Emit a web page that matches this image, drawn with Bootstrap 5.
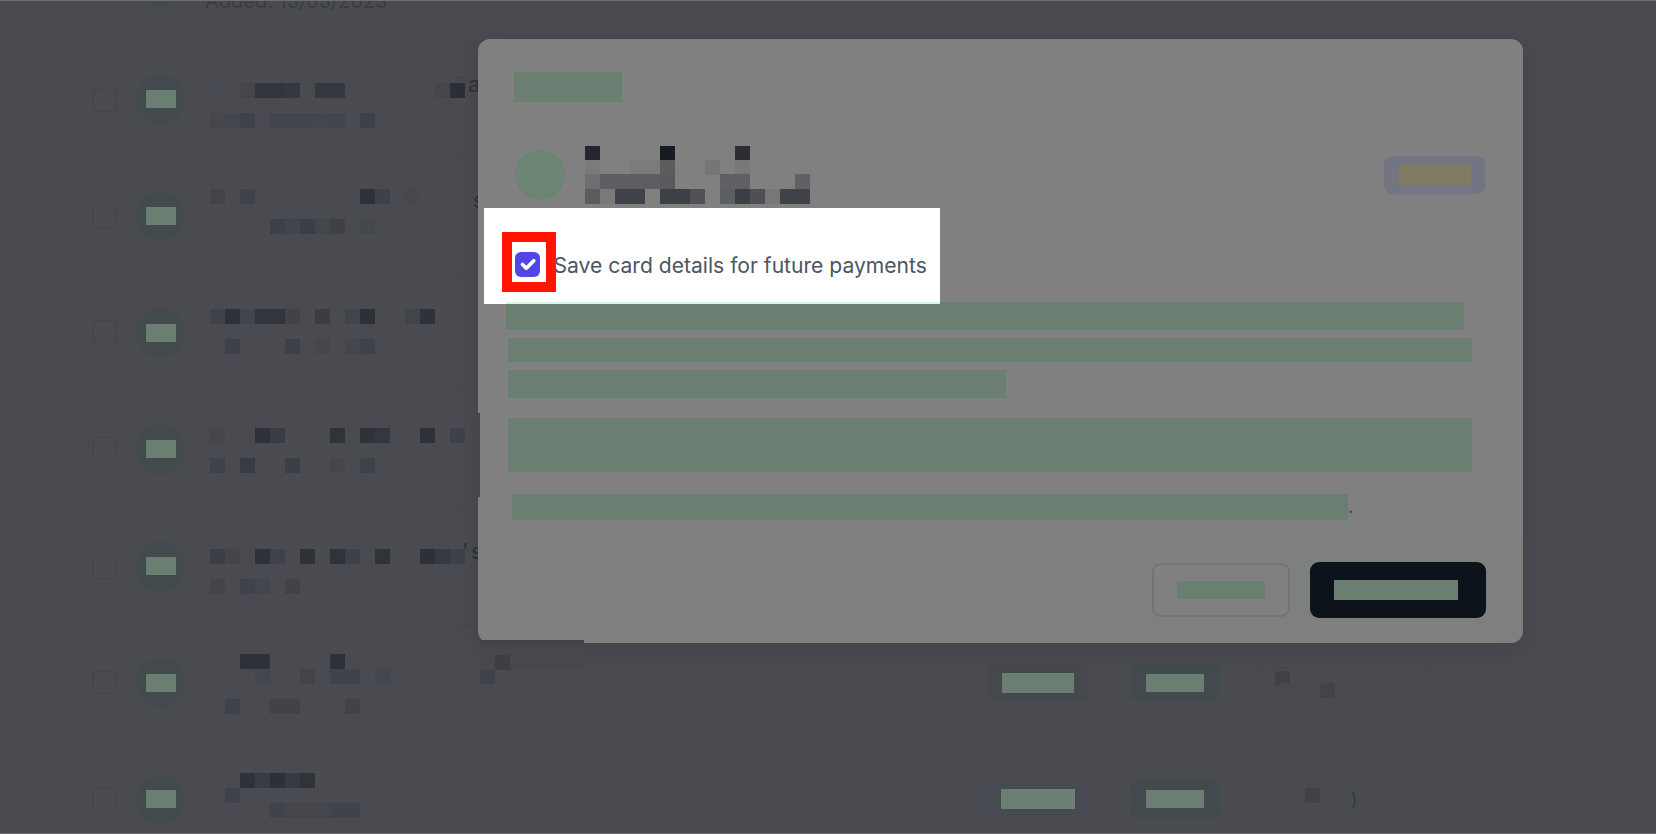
<!doctype html>
<html lang="en">
<head>
<meta charset="utf-8">
<title>Save card details</title>
<link href="https://cdn.jsdelivr.net/npm/bootstrap@5.3.0/dist/css/bootstrap.min.css" rel="stylesheet">
<style>
html,body{height:834px;overflow:hidden;background:#494b51;font-family:Inter,"Liberation Sans",sans-serif}
.stage{position:relative;height:834px;overflow:hidden;border-top:1px solid #6f7073;border-bottom:1px solid #6f7073}
.rows{margin-left:52px;width:1414px;background:#4a4b50;height:832px;margin-top:0}
.rows-inner{margin-top:-76px}
.line-row{height:116.67px;padding-left:40px;padding-right:39px;border-bottom:1px solid #46474c}
.tick{width:25px;height:25px;border:2px solid #46474c;border-radius:6px;flex:none}
.ava{width:49px;height:49px;border-radius:50%;background:#424a4d;flex:none;margin-left:19px}
.mint{background:#6a7f72;display:block}
.ava-in{width:30px;height:18px}
.mos{width:300px;height:116px;margin-left:25px;flex:none;overflow:visible}
.mos rect,.mos-top rect,.mos-card rect{width:15px;height:15px}
.mos text{font:22px Inter,"Liberation Sans",sans-serif;fill:#2f3138}
.mos .dim{fill:#46474c}
.added{font-size:20px !important;fill:#3a3c44 !important}
.pill-a{width:102px;height:37px;background:#47484d;border-radius:8px}
.pill-a.bluish{height:32px;background:#484a53}
.pill-b{width:90px;height:37px;background:#424a4d;border-radius:8px;margin-left:41px}
.pm-a{width:72px;height:20px}.pm-a2{width:74px;height:20px}.pm-b{width:58px;height:18px}
.mini-card{width:167px;height:64px;border:1px solid #47484c;border-radius:8px;margin-left:40px}
.mos-card{width:165px;height:62px;display:block}
.mos-card text{font:18px Inter,"Liberation Sans",sans-serif;fill:#35373e}
.veil{position:absolute;left:478px;top:38px;width:1045px;height:604px;border-radius:12px;background:linear-gradient(#808080 499px,#7e807e 499px);box-shadow:0 6px 24px rgba(0,0,0,.1);border:0;display:block;padding-top:33px}
.v-title{width:108px;height:30px;margin-left:36px}
.v-person{height:58px;margin-top:44px;padding-left:37px;padding-right:38px}
.v-circle{width:50px;height:50px;border-radius:50%;background:#6b8474;flex:none}
.mos-top{width:225px;height:58px;margin-left:20px;flex:none}
.v-badge{width:101px;height:38px;border-radius:8px;background:#737583}
.v-badge i{display:block;width:72px;height:20px;background:#807c64}
.v-white{width:456px;height:96px;background:#fff;margin:4px 0 -2px 6px;padding:24px 0 0 18px}
.v-red{width:54px;height:60px;border:10px solid #ff1400;background:#fff;flex:none;padding:10px 0 0 3px}
.v-red .form-check-input{width:25px;height:25px;margin:0;display:block;border-radius:6px;border:0;background-color:#4f46e5}
.v-label{font-size:21.1px;line-height:24px;color:#4b5563;margin:0 0 0 -2.5px;padding-top:22px;white-space:nowrap}
.b1{width:958px;height:28px;margin-left:28px;position:relative}
.b1::before{content:"";position:absolute;left:0;top:0;width:434px;height:2px;background:#d1fae5}
.b2{width:964px;height:24px;margin:8px 0 0 30px}
.b3{width:498px;height:28px;margin:8px 0 0 30px}
.b4{width:964px;height:54px;margin:20px 0 0 30px}
.b5wrap{margin:22px 0 0 34px;height:26px;line-height:26px;color:#3a3c44;font-size:18px}
.b5{width:836px;height:26px}
.v-foot{margin-top:42px;padding-right:37px;gap:20px}
.btn.v-cancel{width:138px;height:54px;border:2px solid #747474;border-radius:9px;background:#808080;padding:0}
.btn.v-go{width:176px;height:56px;border:0;border-radius:9px;background:#0d131a;padding:0}
.vc-in{width:88px;height:18px}.vg-in{width:124px;height:20px;margin-left:-4px}
.v-strip{position:absolute;left:0;top:374px;width:2px;height:84px;background:#46474b}
.v-patch{position:absolute;left:2px;top:601px;width:104px;height:30px;background:linear-gradient(#434448 5px,#47484c 5px)}
.v-patch b{position:absolute;left:15px;top:15px;width:15px;height:15px;background:#3f3f42}
</style>
</head>
<body>
<div class="stage">
  <div class="rows">
    <div class="rows-inner">
      <div class="line-row d-flex align-items-center">
        <span class="tick"></span><span class="ava d-flex align-items-center justify-content-center"></span>
        <svg class="mos" viewBox="0 0 300 116"><text class="added" x="-5" y="83">Added: 15/05/2023</text></svg>
      </div>
      <div class="line-row d-flex align-items-center">
        <span class="tick"></span><span class="ava d-flex align-items-center justify-content-center"><i class="mint ava-in"></i></span>
        <svg class="mos" viewBox="0 0 300 116"><text x="242" y="51"><tspan class="dim">D</tspan>a</text>
          <rect x="0" y="42" fill="#484a52"/><rect x="30" y="42" fill="#44464b"/><rect x="45" y="42" fill="#33353d"/><rect x="60" y="42" fill="#33353d"/><rect x="75" y="42" fill="#36383f"/><rect x="105" y="42" fill="#363840"/><rect x="120" y="42" fill="#363840"/><rect x="225" y="42" fill="#44464b"/><rect x="240" y="42" fill="#2c2f37"/>
          <rect x="0" y="72" fill="#46474b"/><rect x="15" y="72" fill="#43464f"/><rect x="30" y="72" fill="#3f424a"/><rect x="60" y="72" fill="#42454e"/><rect x="75" y="72" fill="#42454e"/><rect x="90" y="72" fill="#42454e"/><rect x="105" y="72" fill="#44464e"/><rect x="120" y="72" fill="#42454e"/><rect x="150" y="72" fill="#3e4149"/>
        </svg>
      </div>
      <div class="line-row d-flex align-items-center">
        <span class="tick"></span><span class="ava d-flex align-items-center justify-content-center"><i class="mint ava-in"></i></span>
        <svg class="mos" viewBox="0 0 300 116"><text x="263" y="50">s</text>
          <rect x="0" y="31" fill="#434449"/><rect x="30" y="31" fill="#3f4249"/><rect x="150" y="31" fill="#2f3139"/><rect x="165" y="31" fill="#3f414a"/><rect x="195" y="31" fill="#46484c"/>
          <rect x="60" y="61" fill="#3e4047"/><rect x="75" y="61" fill="#43454d"/><rect x="90" y="61" fill="#3c3e47"/><rect x="105" y="61" fill="#44464e"/><rect x="120" y="61" fill="#414145"/><rect x="150" y="61" fill="#44474c"/>
        </svg>
      </div>
      <div class="line-row d-flex align-items-center">
        <span class="tick"></span><span class="ava d-flex align-items-center justify-content-center"><i class="mint ava-in"></i></span>
        <svg class="mos" viewBox="0 0 300 116">
          <rect x="0" y="34" fill="#41434b"/><rect x="15" y="34" fill="#2f3139"/><rect x="30" y="34" fill="#42444c"/><rect x="45" y="34" fill="#34363e"/><rect x="60" y="34" fill="#33353d"/><rect x="75" y="34" fill="#424348"/><rect x="105" y="34" fill="#3b3d43"/><rect x="135" y="34" fill="#42444c"/><rect x="150" y="34" fill="#2d3037"/><rect x="195" y="34" fill="#42444c"/><rect x="210" y="34" fill="#2f3239"/>
          <rect x="15" y="64" fill="#3f414a"/><rect x="75" y="64" fill="#3e4047"/><rect x="105" y="64" fill="#46474b"/><rect x="135" y="64" fill="#44464c"/><rect x="150" y="64" fill="#3f424a"/>
        </svg>
      </div>
      <div class="line-row d-flex align-items-center">
        <span class="tick"></span><span class="ava d-flex align-items-center justify-content-center"><i class="mint ava-in"></i></span>
        <svg class="mos" viewBox="0 0 300 116">
          <rect x="0" y="37" fill="#46474b"/><rect x="45" y="37" fill="#2f3138"/><rect x="60" y="37" fill="#3a3c44"/><rect x="120" y="37" fill="#30333a"/><rect x="150" y="37" fill="#30323a"/><rect x="165" y="37" fill="#343640"/><rect x="210" y="37" fill="#2f3138"/><rect x="240" y="37" fill="#3f424b"/>
          <rect x="0" y="67" fill="#3f424a"/><rect x="30" y="67" fill="#383b43"/><rect x="75" y="67" fill="#3c3f45"/><rect x="120" y="67" fill="#46474b"/><rect x="150" y="67" fill="#3f414b"/>
        </svg>
      </div>
      <div class="line-row d-flex align-items-center">
        <span class="tick"></span><span class="ava d-flex align-items-center justify-content-center"><i class="mint ava-in"></i></span>
        <svg class="mos" viewBox="0 0 300 116"><text x="252" y="51">'<tspan x="261">s</tspan></text>
          <rect x="0" y="41" fill="#3c3e46"/><rect x="15" y="41" fill="#444549"/><rect x="45" y="41" fill="#303239"/><rect x="60" y="41" fill="#40424b"/><rect x="90" y="41" fill="#303239"/><rect x="120" y="41" fill="#30333a"/><rect x="135" y="41" fill="#3f414a"/><rect x="165" y="41" fill="#30333a"/><rect x="210" y="41" fill="#2d3037"/><rect x="225" y="41" fill="#383a43"/><rect x="240" y="41" fill="#3e404a"/>
          <rect x="0" y="71" fill="#444549"/><rect x="30" y="71" fill="#3f414b"/><rect x="45" y="71" fill="#44464f"/><rect x="75" y="71" fill="#414349"/>
        </svg>
      </div>
      <div class="line-row d-flex align-items-center">
        <span class="tick"></span><span class="ava d-flex align-items-center justify-content-center"><i class="mint ava-in"></i></span>
        <svg class="mos" viewBox="0 0 300 116">
          <rect x="30" y="29" fill="#2f3139"/><rect x="45" y="29" fill="#2f3139"/><rect x="120" y="29" fill="#2e3138"/>
          <rect x="45" y="44" fill="#44474f"/><rect x="90" y="44" fill="#434449"/><rect x="120" y="44" fill="#41434c"/><rect x="135" y="44" fill="#41434c"/><rect x="165" y="44" fill="#44474f"/><rect x="270" y="44" fill="#3f424b"/>
          <rect x="15" y="74" fill="#3f424b"/><rect x="60" y="74" fill="#414349"/><rect x="75" y="74" fill="#414349"/><rect x="135" y="74" fill="#424346"/>
        </svg>
        <div class="ms-auto d-flex align-items-center">
          <span class="pill-a d-flex align-items-center justify-content-center"><i class="mint pm-a"></i></span>
          <span class="pill-b d-flex align-items-center justify-content-center"><i class="mint pm-b"></i></span>
          <div class="mini-card"><svg class="mos-card" viewBox="0 0 165 62"><rect x="14" y="19" fill="#414247"/><rect x="18" y="31" fill="#484a50"/><rect x="59" y="31" fill="#434448"/></svg></div>
        </div>
      </div>
      <div class="line-row d-flex align-items-center">
        <span class="tick"></span><span class="ava d-flex align-items-center justify-content-center"><i class="mint ava-in"></i></span>
        <svg class="mos" viewBox="0 0 300 116">
          <rect x="30" y="32" fill="#2f3139"/><rect x="45" y="32" fill="#3a3c44"/><rect x="60" y="32" fill="#2d3037"/><rect x="75" y="32" fill="#383a43"/><rect x="90" y="32" fill="#30333a"/>
          <rect x="15" y="47" fill="#3f424b"/>
          <rect x="60" y="62" fill="#41434b"/><rect x="75" y="62" fill="#44464c"/><rect x="90" y="62" fill="#44464c"/><rect x="105" y="62" fill="#44464c"/><rect x="120" y="62" fill="#41434b"/><rect x="135" y="62" fill="#41434b"/>
        </svg>
        <div class="ms-auto d-flex align-items-center">
          <span class="pill-a bluish d-flex align-items-center justify-content-center"><i class="mint pm-a2"></i></span>
          <span class="pill-b d-flex align-items-center justify-content-center"><i class="mint pm-b"></i></span>
          <div class="mini-card"><svg class="mos-card" viewBox="0 0 165 62"><rect x="44" y="20" fill="#414247"/><text x="90" y="38">)</text></svg></div>
        </div>
      </div>
    </div>
  </div>

  <div class="veil modal-content">
    <i class="mint v-title"></i>
    <div class="v-person d-flex align-items-center">
      <span class="v-circle"></span>
      <svg class="mos-top" viewBox="0 0 225 58">
        <rect x="0" y="0" fill="#23262e"/><rect x="75" y="0" fill="#181b23"/><rect x="150" y="0" fill="#2b2d32"/>
        <rect x="0" y="14" fill="#7a7c7a"/><rect x="45" y="14" fill="#7b7b7b"/><rect x="60" y="14" fill="#7b7b7b"/><rect x="75" y="14" fill="#5b5c5e"/><rect x="120" y="14" fill="#767676"/><rect x="150" y="14" fill="#787878"/>
        <rect x="0" y="28" fill="#6d6e70"/><rect x="15" y="28" fill="#5c5e62"/><rect x="30" y="28" fill="#5c5e62"/><rect x="45" y="28" fill="#5c5e62"/><rect x="60" y="28" fill="#5c5e62"/><rect x="75" y="28" fill="#595a5e"/><rect x="135" y="28" fill="#5f6064"/><rect x="150" y="28" fill="#5f6064"/><rect x="210" y="28" fill="#616165"/>
        <rect x="0" y="43" fill="#5c5c60"/><rect x="15" y="43" fill="#797979"/><rect x="30" y="43" fill="#3f4249"/><rect x="45" y="43" fill="#3f4249"/><rect x="75" y="43" fill="#3e4047"/><rect x="90" y="43" fill="#3e4047"/><rect x="105" y="43" fill="#515255"/><rect x="135" y="43" fill="#5c5f62"/><rect x="150" y="43" fill="#3d3f47"/><rect x="165" y="43" fill="#505054"/><rect x="180" y="43" fill="#777777"/><rect x="195" y="43" fill="#404249"/><rect x="210" y="43" fill="#404249"/>
      </svg>
      <span class="v-badge ms-auto d-flex align-items-center justify-content-center"><i></i></span>
    </div>
    <div class="v-white d-flex">
      <div class="v-red"><input class="form-check-input" type="checkbox" id="saveCard" checked></div>
      <label class="v-label form-check-label" for="saveCard">Save card details for future payments</label>
    </div>
    <i class="mint b1"></i>
    <i class="mint b2"></i>
    <i class="mint b3"></i>
    <i class="mint b4"></i>
    <div class="b5wrap d-flex"><i class="mint b5"></i><span>.</span></div>
    <div class="v-foot d-flex justify-content-end align-items-center">
      <button type="button" class="btn v-cancel d-flex align-items-center justify-content-center"><i class="mint vc-in"></i></button>
      <button type="button" class="btn v-go d-flex align-items-center justify-content-center"><i class="mint vg-in"></i></button>
    </div>
    <span class="v-strip"></span>
    <span class="v-patch"><b></b></span>
  </div>
</div>
<script src="https://cdn.jsdelivr.net/npm/bootstrap@5.3.0/dist/js/bootstrap.bundle.min.js"></script>
</body>
</html>
